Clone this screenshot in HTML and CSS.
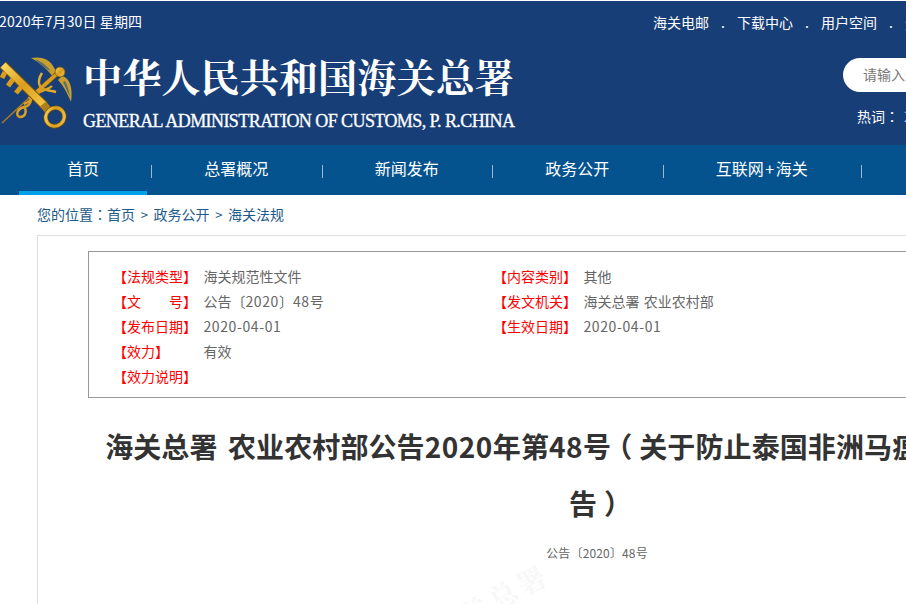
FILE: index.html
```html
<!DOCTYPE html>
<html lang="zh-CN">
<head>
<meta charset="utf-8">
<title>海关总署 农业农村部公告2020年第48号</title>
<link rel="stylesheet" href="styles.css">
</head>
<body>
<div class="page">
  <header class="header">
    <div class="top">
      <div class="date">2020年7月30日 星期四</div>
      <ul class="top-links">
        <li>海关电邮</li><li class="dot">.</li>
        <li>下载中心</li><li class="dot">.</li>
        <li>用户空间</li><li class="dot">.</li>
        <li>无障碍</li>
      </ul>
    </div>
    <div class="brand">
      <svg class="logo" width="73" height="85" viewBox="0 0 73 85" aria-hidden="true">
        <defs>
          <linearGradient id="gold" x1="0" y1="0" x2="1" y2="1">
            <stop offset="0" stop-color="#f8d860"/>
            <stop offset=".5" stop-color="#d99c1e"/>
            <stop offset="1" stop-color="#f4c844"/>
          </linearGradient>
        </defs>
        <path d="M31 8 C40 6 50 9 53 16 C55 20 57 21 58 24 L54 29 C50 22 42 14 31 8Z" fill="#c99f2e"/>
        <path d="M35 9 C41 11 46 15 51 21 C46 19 40 15 35 9Z" fill="#5d6f6a"/>
        <path d="M62 26 C70 28 73 38 71 52 C67 42 62 34 58 30Z" fill="#c99f2e"/>
        <path d="M65 31 C68 36 69 41 70 47 C67 41 65 36 63 32Z" fill="#5d6f6a"/>
        <path d="M2 73 L30 47" stroke="#a87a24" stroke-width="1.6" fill="none"/>
        <path d="M29 49 L60 21" stroke="#7a5510" stroke-width="5" fill="none"/>
        <path d="M29 49 L60 21" stroke="url(#gold)" stroke-width="3.5" fill="none"/>
        <circle cx="60" cy="22" r="5" fill="url(#gold)" stroke="#7a5510" stroke-width=".8"/>
        <path d="M42 23 C37 31 38 39 47 40 C50 41 53 41 56 42 M52 36 C48 40 40 40 36 45 C31 50 28 53 24 54 M30 43 C33 50 30 56 24 57 C17 59 15 66 20 67 C26 67 27 60 24 57" stroke="url(#gold)" stroke-width="2.4" fill="none"/>
        <path d="M3 15 L44 55" stroke="#7a5510" stroke-width="9" fill="none"/>
        <path d="M3 15 L44 55" stroke="url(#gold)" stroke-width="7" fill="none"/>
        <path d="M5 22 L2 28 M13 29 L8 36 M21 37 L16 43" stroke="#d99c1e" stroke-width="5" fill="none"/>
        <path d="M43 54 L48 60" stroke="#b07f1b" stroke-width="8" fill="none"/>
        <ellipse cx="55" cy="67" rx="9.5" ry="9" transform="rotate(-40 55 67)" fill="none" stroke="#7a5510" stroke-width="4.4"/>
        <ellipse cx="55" cy="67" rx="9.5" ry="9" transform="rotate(-40 55 67)" fill="none" stroke="url(#gold)" stroke-width="3"/>
      </svg>
      <div class="brand-text">
        <div class="brand-cn">中华人民共和国海关总署</div>
        <div class="brand-en">GENERAL ADMINISTRATION OF CUSTOMS, P. R.CHINA</div>
      </div>
      <div class="search-col">
        <div class="search"><span class="placeholder">请输入关键字</span></div>
        <div class="hot">热词<span class="punct">：</span><span class="hot-word">2020</span></div>
      </div>
    </div>
  </header>
  <nav class="nav">
    <a class="nav-item active">首页</a><i class="sep"></i>
    <a class="nav-item">总署概况</a><i class="sep"></i>
    <a class="nav-item">新闻发布</a><i class="sep"></i>
    <a class="nav-item">政务公开</a><i class="sep"></i>
    <a class="nav-item">互联网<span class="plus">+</span>海关</a><i class="sep"></i>
  </nav>
  <div class="crumbs">您的位置<span class="punct">：</span>首页<span class="gt">&gt;</span>政务公开<span class="gt">&gt;</span>海关法规</div>
  <main class="card">
    <section class="meta">
      <div class="meta-grid">
        <div class="meta-row"><span class="label">【法规类型】</span><span>海关规范性文件</span></div>
        <div class="meta-row"><span class="label">【内容类别】</span><span>其他</span></div>
        <div class="meta-row"><span class="label">【文　　号】</span><span>公告〔<span class="num">2020</span>〕<span class="num">48</span>号</span></div>
        <div class="meta-row"><span class="label">【发文机关】</span><span>海关总署 农业农村部</span></div>
        <div class="meta-row"><span class="label">【发布日期】</span><span class="num">2020-04-01</span></div>
        <div class="meta-row"><span class="label">【生效日期】</span><span class="num">2020-04-01</span></div>
        <div class="meta-row wide"><span class="label">【效力】</span><span>有效</span></div>
        <div class="meta-row wide"><span class="label">【效力说明】</span><span></span></div>
      </div>
    </section>
    <h1 class="title">海关总署 农业农村部公告<span class="title-num">2020</span>年第<span class="title-num">48</span>号<span class="paren-open">（</span>关于防止泰国非洲马瘟传入我国的公告<span class="paren-close">）</span></h1>
    <div class="doc-no">公告〔2020〕48号</div>
    <div class="watermark">海关总署</div>
  </main>
</div>
</body>
</html>
```
FILE: styles.css
```css
html, body { margin: 0; padding: 0; height: 100%; overflow: hidden; background: #fff; }
body { font-family: "Noto Sans CJK SC", "Liberation Sans", sans-serif; font-size: 14px; color: #333; }
ul { list-style: none; margin: 0; padding: 0; }

.page { width: 1194px; padding-top: 1px; }
.num { letter-spacing: .6px; }
.punct { font-family: "Noto Sans CJK TC", sans-serif; font-feature-settings: "locl" 0; }

.header { background: #173e77; height: 144px; color: #fff; }
.top { display: flex; padding-top: 8px; height: 26px; line-height: 24px; }
.date { width: 654px; margin-left: -1px; white-space: nowrap; letter-spacing: .12px; }
.top-links { display: flex; padding-top: 1px; }
.top-links .dot { width: 28px; text-align: center; }
.top-links li { white-space: nowrap; }

.brand { display: flex; margin-top: 16px; }
.logo { flex: none; margin-top: -1px; margin-right: 10px; }
.brand-text { width: 760px; }
.brand-cn { font-family: "Noto Serif CJK SC", "Noto Sans CJK SC", serif; font-size: 39.2px; font-weight: 700; line-height: 46px; white-space: nowrap; margin-top: 1px; }
.brand-en { font-family: "Liberation Serif", serif; font-size: 18px; line-height: 22px; margin-top: 12px; letter-spacing: -.57px; -webkit-text-stroke: .3px #fff; white-space: nowrap; }
.search-col { width: 280px; margin-top: 7px; }
.search { height: 34px; line-height: 32px; background: #fff; border-radius: 17px 0 0 17px; padding-left: 20px; width: 200px; }
.placeholder { color: #777; font-size: 14px; }
.hot { margin-top: 13px; margin-left: 14px; line-height: 22px; font-size: 14px; }
.hot-word { color: #8fd0ff; margin-left: 5px; }

.nav { background: #04538f; height: 50px; display: flex; align-items: center; padding-left: 19px; box-sizing: border-box; }
.nav-item { font-size: 16px; color: #fff; line-height: 46px; height: 46px; padding: 0 53.25px; white-space: nowrap; border-bottom: 4px solid transparent; }
.nav-item.active { padding: 0 48px; border-bottom-color: #00a0e9; margin-right: 4px; }
.plus { margin: 0 1.5px; }
.sep { width: 1px; height: 13px; background: #9db9d0; flex: none; margin: 3px -1px 0 0; }

.crumbs { padding-left: 37px; height: 40px; line-height: 38px; color: #1d5a88; white-space: nowrap; }
.gt { display: inline-block; width: 18.5px; text-align: center; font-size: 13px; }

.card { position: relative; margin-left: 37px; width: 1118px; min-height: 600px; border: 1px solid #ddd; padding-top: 15px; }
.meta { margin-left: 50px; width: 1016px; height: 145px; border: 1px solid #999; }
.meta-grid { display: grid; grid-template-columns: 380px 380px; padding: 12px 0 0 24px; }
.meta-row { display: flex; line-height: 25px; height: 25px; color: #666; white-space: nowrap; word-spacing: 1px; }
.meta-row.wide { grid-column: 1 / 3; }
.label { width: 90.5px; color: #f00; flex: none; }

.title { margin: 20px 0 0 -5px; width: 1128px; padding: 0 64px; box-sizing: border-box; font-size: 28px; line-height: 57px; font-weight: 700; color: #333; text-align: center; letter-spacing: .1px; word-spacing: 4px; }
.title-num { letter-spacing: .5px; }
.paren-open { display: inline-block; transform: translateX(-7px); }
.paren-close { display: inline-block; transform: translateX(7px); }
.doc-no { text-align: center; font-size: 12px; line-height: 20px; color: #666; margin-top: 11px; letter-spacing: .15px; }
.watermark { position: absolute; left: 388px; top: 345px; font-family: "Noto Serif CJK SC", "Noto Sans CJK SC", serif; font-size: 28px; font-weight: 700; color: #f8f8f8; transform: rotate(-28deg); letter-spacing: 4px; white-space: nowrap; }
```
